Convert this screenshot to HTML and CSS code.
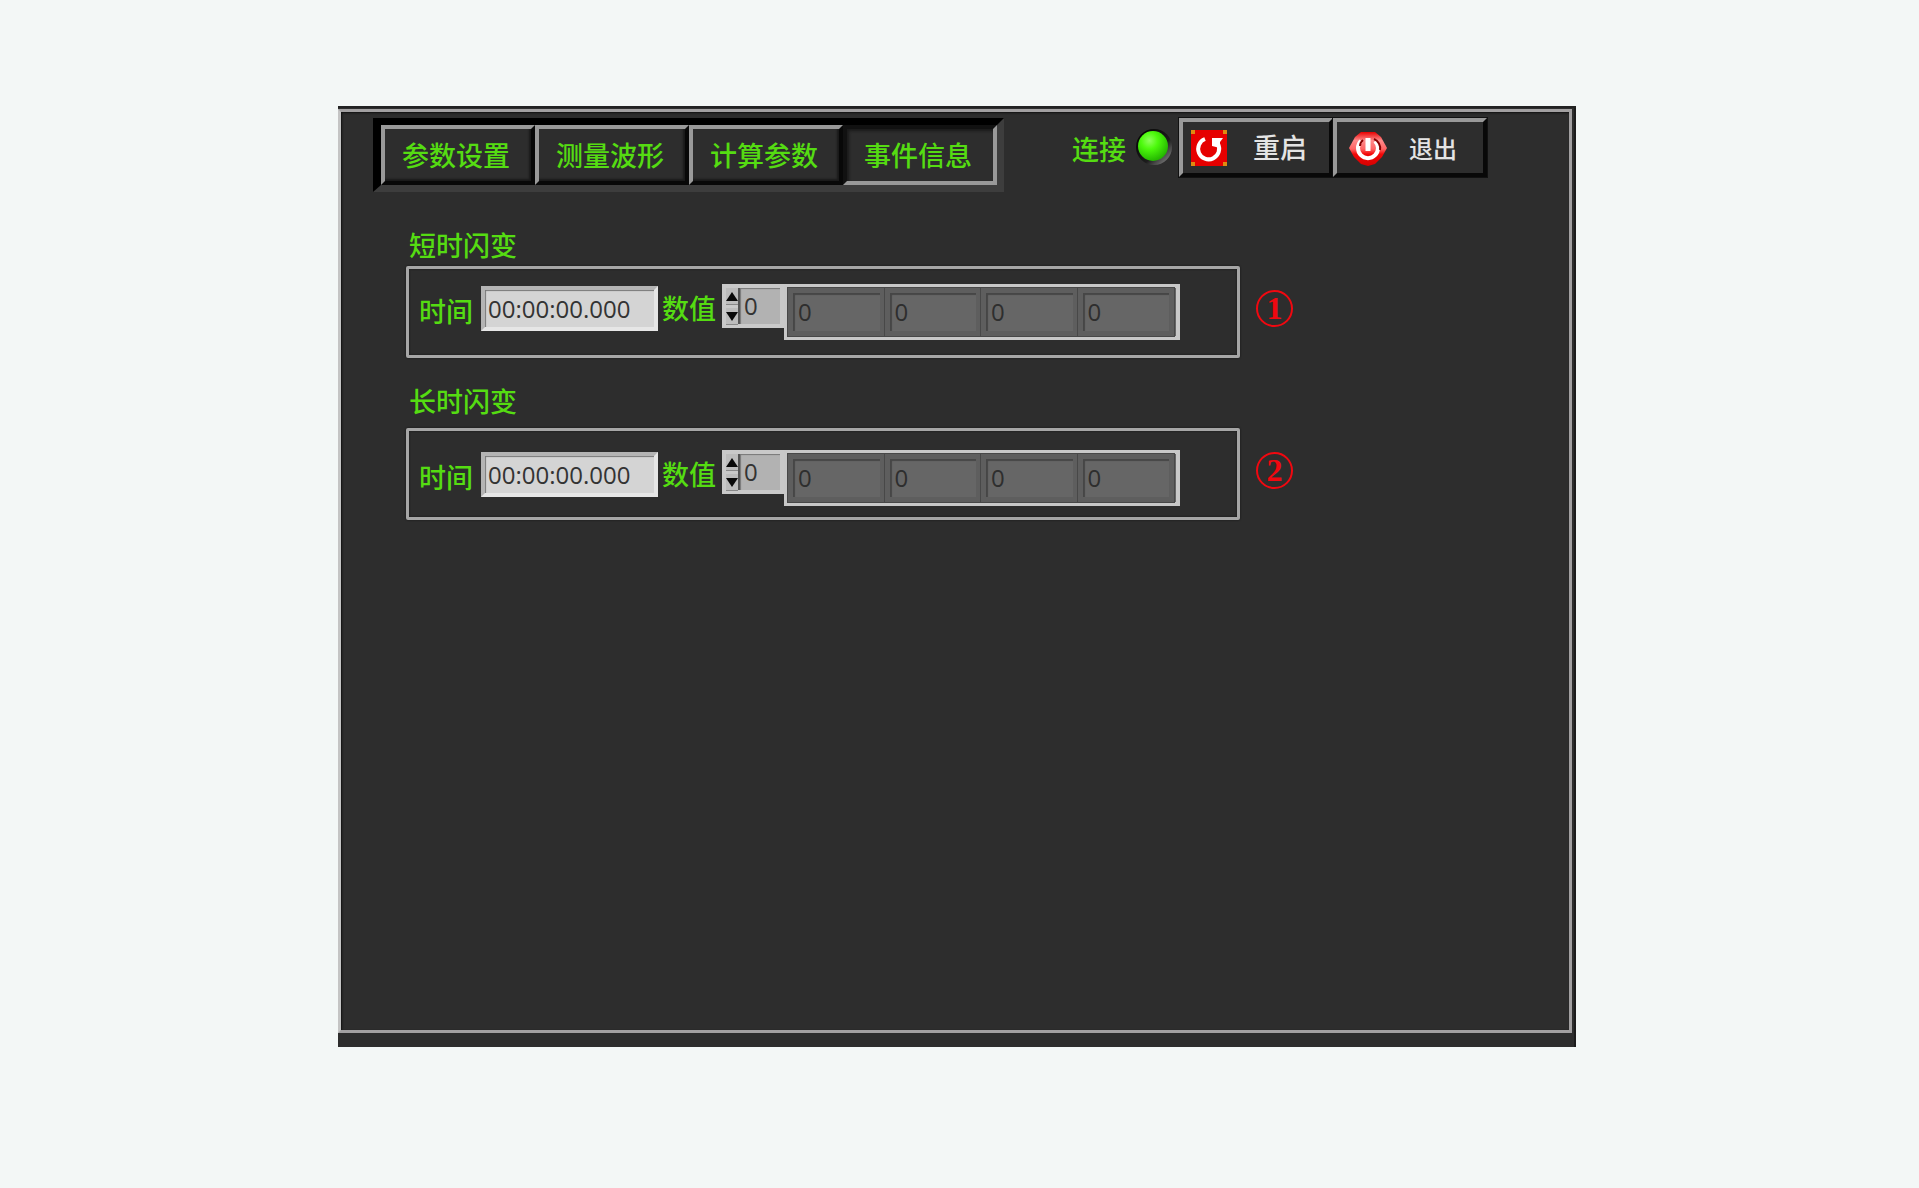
FILE: index.html
```html
<!DOCTYPE html>
<html lang="zh-CN">
<head>
    <meta charset="UTF-8">
    <meta name="viewport" content="width=device-width, initial-scale=1.0">
    <title>事件信息</title>
    <link rel="stylesheet" href="styles.css">
</head>
<body>
    <div class="panel">
        <div class="frame">
            <header class="toolbar">
                <nav class="tabs">
                    <button type="button" class="tab">参数设置</button>
                    <button type="button" class="tab">测量波形</button>
                    <button type="button" class="tab">计算参数</button>
                    <button type="button" class="tab active">事件信息</button>
                </nav>

                <div class="actions">
                    <span class="status">连接</span>
                    <svg class="led" viewBox="0 0 40 40" aria-hidden="true">
                        <defs>
                            <radialGradient id="ledFill" cx="38%" cy="32%" r="70%">
                                <stop offset="0" stop-color="#8dff5c"/>
                                <stop offset="0.4" stop-color="#4dfa0c"/>
                                <stop offset="1" stop-color="#23b400"/>
                            </radialGradient>
                            <linearGradient id="ledRim" x1="0" y1="0" x2="1" y2="1">
                                <stop offset="0" stop-color="#000"/>
                                <stop offset="0.6" stop-color="#1c1c1c"/>
                                <stop offset="1" stop-color="#999"/>
                            </linearGradient>
                        </defs>
                        <circle cx="20" cy="20" r="18" fill="url(#ledRim)"/>
                        <circle cx="19" cy="19" r="15" fill="url(#ledFill)"/>
                    </svg>
                    <button type="button" class="action">
                        <svg class="icon" viewBox="0 0 36 36" aria-hidden="true">
                            <rect width="36" height="36" fill="#e60000"/>
                            <path d="M0 0h4v4H0zM32 0h4v4h-4zM0 32h4v4H0zM32 32h4v4h-4z" fill="#e08a10"/>
                            <path d="M14 9A10.500 10.500 0 1 0 27 14" fill="none" stroke="#fff" stroke-width="4"/>
                            <path d="M21 8h11l-3 4v6l-8-2z" fill="#fff"/>
                        </svg>
                        <span class="restart-text">重启</span>
                    </button>
                    <button type="button" class="action exit">
                        <svg class="icon" viewBox="0 0 38 34" aria-hidden="true">
                            <defs>
                                <linearGradient id="exitFill" x1="0" y1="0" x2="0" y2="1">
                                    <stop offset="0" stop-color="#e80000"/>
                                    <stop offset="0.25" stop-color="#ff8a8a"/>
                                    <stop offset="0.5" stop-color="#ff6464"/>
                                    <stop offset="0.65" stop-color="#f20808"/>
                                    <stop offset="1" stop-color="#d40000"/>
                                </linearGradient>
                            </defs>
                            <path d="M12 0h14l6 5 6 11-5 9-7 7-7 2-7-2-7-7-5-9 6-11z" fill="url(#exitFill)"/>
                            <path d="M12 9a10 10 0 1 0 14 0" fill="none" stroke="#fff" stroke-width="4"/>
                            <path d="M19 6v13" stroke="#fff" stroke-width="5"/>
                            <path d="M25 7a10 10 0 0 1 6 11M14 8a8 8 0 0 0-3 6" fill="none" stroke="#800" stroke-width="2"/>
                        </svg>
                        <span class="exit-text">退出</span>
                    </button>
                </div>
            </header>

            <main>
                <section class="flicker short">
                    <h2>短时闪变</h2>
                    <div class="line">
                        <div class="box">
                            <label for="shortTime">时间</label>
                            <input type="text" id="shortTime" class="time" value="00:00:00.000">
                            <label for="shortIndex" class="value-label">数值</label>
                            <div class="index">
                                <div class="spin">
                                    <button type="button" class="up" aria-label="增加"></button>
                                    <button type="button" class="down" aria-label="减少"></button>
                                </div>
                                <input type="text" id="shortIndex" value="0">
                            </div>
                            <div class="cells">
                                <input type="text" value="0" aria-label="数值 1" readonly>
                                <input type="text" value="0" aria-label="数值 2" readonly>
                                <input type="text" value="0" aria-label="数值 3" readonly>
                                <input type="text" value="0" aria-label="数值 4" readonly>
                            </div>
                        </div>
                        <span class="mark">1</span>
                    </div>
                </section>

                <section class="flicker long">
                    <h2>长时闪变</h2>
                    <div class="line">
                        <div class="box">
                            <label for="longTime">时间</label>
                            <input type="text" id="longTime" class="time" value="00:00:00.000">
                            <label for="longIndex" class="value-label">数值</label>
                            <div class="index">
                                <div class="spin">
                                    <button type="button" class="up" aria-label="增加"></button>
                                    <button type="button" class="down" aria-label="减少"></button>
                                </div>
                                <input type="text" id="longIndex" value="0">
                            </div>
                            <div class="cells">
                                <input type="text" value="0" aria-label="数值 1" readonly>
                                <input type="text" value="0" aria-label="数值 2" readonly>
                                <input type="text" value="0" aria-label="数值 3" readonly>
                                <input type="text" value="0" aria-label="数值 4" readonly>
                            </div>
                        </div>
                        <span class="mark">2</span>
                    </div>
                </section>
            </main>
        </div>
    </div>
</body>
</html>
```
FILE: styles.css
```css
/* Reset and base styles */
* {
    margin: 0;
    padding: 0;
    box-sizing: border-box;
}

body {
    display: flex;
    min-height: 100vh;
    padding: 106px 343px 141px 338px;
    background: #f3f7f6;
    color: #55dc12;
    font-family: "Open Sans", "Noto Sans CJK SC", sans-serif;
    font-size: 27px;
    font-weight: 500;
    line-height: 32px;
}

button, input {
    font: inherit;
    color: inherit;
    border: none;
    border-radius: 0;
    min-width: 0;
}

button {
    cursor: pointer;
}

/* Window */
.panel {
    flex: 1;
    display: flex;
    padding: 3px 4px 14px 0;
    background: #2d2d2d;
    box-shadow: inset 0 2px #222, inset -2px 0 #1c1c1c;
}

.frame {
    flex: 1;
    border: 3px solid #a2a0a1;
    border-left-color: #c4c4c4;
    box-shadow: inset 1px 1px 2px #111;
}

/* Toolbar */
.toolbar {
    display: flex;
    justify-content: space-between;
    align-items: flex-start;
    padding: 6px 82px 0 32px;
}

.tabs {
    display: flex;
    border: 7px solid #3d3d3d;
    border-top-color: #000;
    border-left: 8px solid #000;
    background: #000;
}

.tab {
    width: 154px;
    height: 60px;
    padding: 2px 4px 0 0;
    border: 4px solid #080808;
    border-top-color: #999;
    border-left-color: #999;
    background: #2d2d2d;
    box-shadow: inset -2px -2px 2px #1a1a1a;
}

.tab.active {
    border-color: #111 #999 #999 #111;
    box-shadow: inset 2px 2px 3px #1a1a1a;
}

.actions {
    display: flex;
}

.status {
    padding-top: 16px;
}

.led {
    width: 40px;
    height: 40px;
    margin: 9px 5px 0 8px;
}

.action {
    display: flex;
    align-items: center;
    justify-content: space-between;
    width: 154px;
    height: 59px;
    padding: 0 22px 0 8px;
    border: 4px solid #080808;
    border-top-color: #999;
    border-left-color: #999;
    background: #2d2d2d;
    color: #e4e4e4;
    outline: 1px solid #111;
}

.action .icon {
    width: 36px;
    height: 36px;
}

.action.exit {
    padding: 2px 26px 0 12px;
}

.exit .icon {
    width: 38px;
    height: 34px;
}

.exit-text {
    font-size: 24px;
}

/* Flicker groups */
.flicker {
    padding-left: 65px;
}

.short {
    padding-top: 38px;
}

.long {
    padding-top: 28px;
}

h2 {
    padding-left: 3px;
    margin-bottom: 4px;
    font-size: 27px;
    font-weight: 500;
}

.long h2 {
    margin-bottom: 10px;
}

.line {
    display: grid;
    grid-template-columns: minmax(0, 834px) auto;
    justify-content: start;
    align-items: center;
    column-gap: 16px;
}

.box {
    display: flex;
    align-items: flex-start;
    height: 92px;
    padding: 15px 0 0 10px;
    border: 3px solid #a6a6a6;
    border-radius: 2px;
    box-shadow: 0 0 2px #111, inset 0 0 2px #111;
}

.long .box {
    padding-top: 19px;
}

label {
    padding-top: 12px;
}

.value-label {
    padding: 9px 6px 0 4px;
}

.time {
    width: 177px;
    height: 45px;
    margin: 2px 0 0 8px;
    padding: 0 3px;
    border: 4px solid #e6e6e6;
    border-top-color: #b4b4b4;
    border-left-color: #b4b4b4;
    background: #d4d4d4;
    color: #333;
    font-size: 24px;
    box-shadow: inset 1px 1px 1px #777;
}

/* Index spinner */
.index {
    display: flex;
    width: 62px;
    height: 44px;
    padding: 4px;
    background: #c9c9c9;
}

.spin {
    display: flex;
    flex-direction: column;
    justify-content: space-between;
    width: 14px;
    border-right: 2px solid #555;
}

.spin button {
    width: 12px;
    height: 16px;
    background: #bcbcbc;
    box-shadow: 0 1px #888;
}

.spin button::before {
    content: "";
    display: block;
    border: 6px solid transparent;
    border-top-width: 0;
    border-bottom: 9px solid #0a0a0a;
}

.spin .down::before {
    border-top: 9px solid #0a0a0a;
    border-bottom-width: 0;
}

.index input {
    flex: 1;
    padding: 0 0 0 4px;
    background: #b2b2b2;
    color: #333;
    font-size: 24px;
    box-shadow: inset 1px 1px 1px #777;
}

/* Value array */
.cells {
    display: grid;
    grid-template-columns: repeat(4, 1fr);
    width: 396px;
    height: 56px;
    padding-right: 2px;
    border: 4px solid #c8c8c8;
    background: #666;
}

.cells input {
    padding: 0 0 0 5px;
    border: 5px solid #5e5e5e;
    outline: 1px solid #484848;
    background: #666;
    color: #2e2e2e;
    font-size: 24px;
    box-shadow: inset 2px 2px 1px #464646;
}

/* Red number next to each group */
.mark {
    width: 37px;
    height: 37px;
    margin-bottom: 8px;
    border: 2px solid #f00810;
    border-radius: 50%;
    color: #f00810;
    font-family: "Liberation Serif", serif;
    font-size: 32px;
    font-weight: bold;
    line-height: 33px;
    text-align: center;
}
```
